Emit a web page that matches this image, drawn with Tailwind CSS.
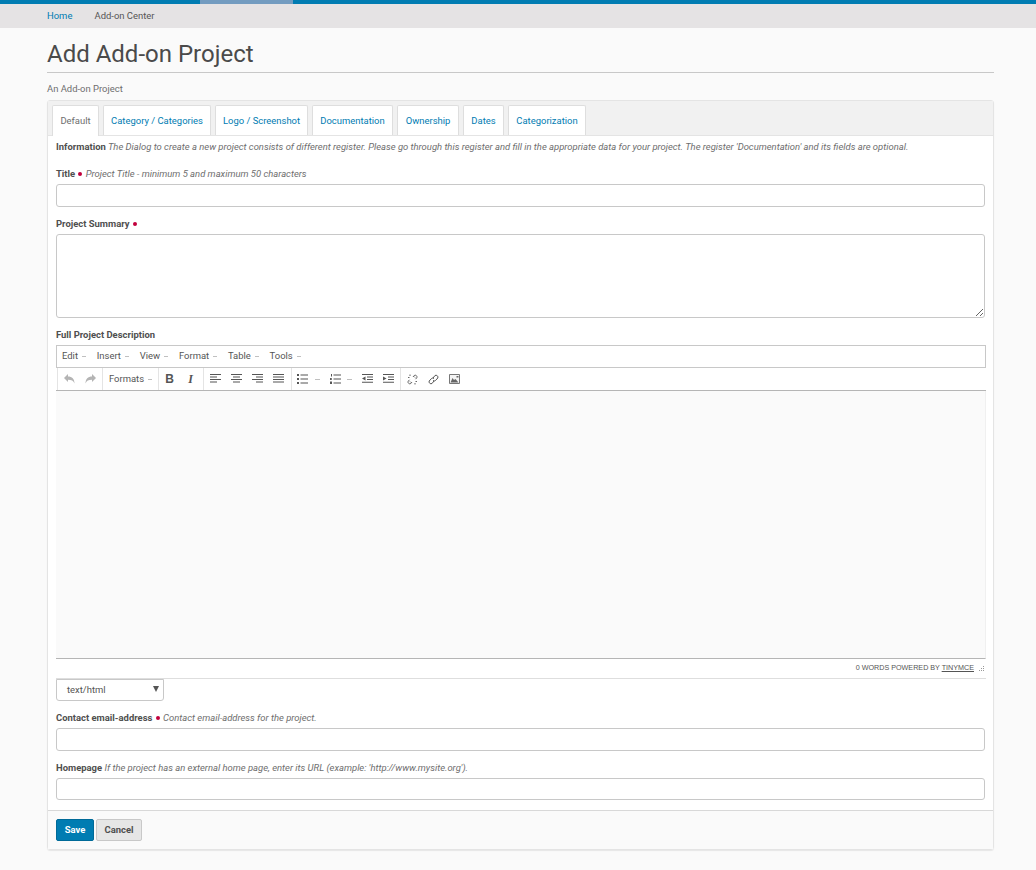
<!DOCTYPE html>
<html lang="en">
<head>
<meta charset="utf-8">
<title>Add Add-on Project</title>
<script src="https://cdn.jsdelivr.net/npm/@tailwindcss/browser@4"></script>
</head>
<body class="bg-[#fafafa] font-['Roboto',sans-serif] text-[#444] h-[870px] overflow-hidden">
    <!-- top bar -->
    <div class="h-1 bg-[#007cb2] pl-[200px]">
        <div class="w-[93px] h-1 bg-[#739cc0]"></div>
    </div>
    <!-- breadcrumb -->
    <div class="h-6 bg-[#e5e3e4] pl-[47px] flex items-center text-[9.45px]">
        <a class="text-[#007cb2] w-[47.5px]">Home</a>
        <span class="text-[#555]">Add-on Center</span>
    </div>

    <div class="w-[947px] ml-[47px]">
        <h1 class="text-[24px] leading-[30px] mt-[11px] h-[30px] text-[#4a4a4a]">Add Add-on Project</h1>
        <div class="border-b border-[#c8c8c8] h-[1px] mt-[3px] mb-[10px]"></div>
        <div class="text-[9.45px] leading-[12px] text-[#6e6e6e] mb-[5px]">An Add-on Project</div>

        <div class="border border-[#e4e4e4] rounded-[3px] shadow-[0_1px_1px_rgba(0,0,0,0.08)] h-[750px] flex flex-col">
            <!-- tabs -->
            <div class="h-[35px] bg-[#f1f1f1] pl-1 pt-1 flex gap-1 text-[9.45px] shrink-0 border-b border-[#e4e4e4]">
                <a class="w-[47px] h-[31px] bg-white rounded-t-[2px] border border-[#dedede] border-b-0 flex items-center justify-center text-[#6e6e6e]">Default</a>
                <a class="w-[108px] h-[30px] bg-white rounded-t-[2px] border border-[#dedede] border-b-0 flex items-center justify-center pt-[1px] text-[#007cb2]">Category / Categories</a>
                <a class="w-[93px] h-[30px] bg-white rounded-t-[2px] border border-[#dedede] border-b-0 flex items-center justify-center pt-[1px] text-[#007cb2]">Logo / Screenshot</a>
                <a class="w-[81px] h-[30px] bg-white rounded-t-[2px] border border-[#dedede] border-b-0 flex items-center justify-center pt-[1px] text-[#007cb2]">Documentation</a>
                <a class="w-[62px] h-[30px] bg-white rounded-t-[2px] border border-[#dedede] border-b-0 flex items-center justify-center pt-[1px] text-[#007cb2]">Ownership</a>
                <a class="w-[41px] h-[30px] bg-white rounded-t-[2px] border border-[#dedede] border-b-0 flex items-center justify-center pt-[1px] text-[#007cb2]">Dates</a>
                <a class="w-[78px] h-[30px] bg-white rounded-t-[2px] border border-[#dedede] border-b-0 flex items-center justify-center pt-[1px] text-[#007cb2]">Categorization</a>
            </div>

            <!-- form -->
            <div class="flex-1 bg-white pl-2 pr-2 text-[9.45px]">
                <p class="mt-[5px] leading-[12px] text-[#6e6e6e] italic"><b class="not-italic font-bold text-[#4f4f4f]">Information</b> The Dialog to create a new project consists of different register. Please go through this register and fill in the appropriate data for your project. The register 'Documentation' and its fields are optional.</p>

                <p class="mt-[15px] leading-[12px] text-[#6e6e6e] italic"><b class="not-italic font-bold text-[#4f4f4f]">Title</b> <span class="inline-block w-[4px] h-[4px] mx-[1px] rounded-full bg-[#c2003c] align-[1px]"></span> Project Title - minimum 5 and maximum 50 characters</p>
                <div class="mt-[4px] h-[23px] w-[929px] bg-white border border-[#c8c8c8] rounded-[3px]"></div>

                <p class="mt-[11px] leading-[12px] text-[#6e6e6e]"><b class="font-bold text-[#4f4f4f]">Project Summary</b> <span class="inline-block w-[4px] h-[4px] mx-[1px] rounded-full bg-[#c2003c] align-[1px]"></span></p>
                <textarea class="block mt-[4px] h-[84px] w-[929px] bg-white border border-[#c8c8c8] rounded-[3px]"></textarea>

                <p class="mt-[11px] leading-[12px] font-bold text-[#4f4f4f]">Full Project Description</p>

                <!-- tinymce -->
                <div class="mt-[4px] w-[930px] h-[334px] flex flex-col border-b border-[#dedede] text-[#555]">
                    <div class="h-[23px] border border-[#c8c8c8] bg-white flex items-center pl-[5px] gap-[10.8px] shrink-0">
                        <span class="flex items-center">Edit<i class="w-[4px] h-px ml-[4px] bg-[#c0c0c0]"></i></span>
                        <span class="flex items-center">Insert<i class="w-[4px] h-px ml-[4px] bg-[#c0c0c0]"></i></span>
                        <span class="flex items-center">View<i class="w-[4px] h-px ml-[4px] bg-[#c0c0c0]"></i></span>
                        <span class="flex items-center">Format<i class="w-[4px] h-px ml-[4px] bg-[#c0c0c0]"></i></span>
                        <span class="flex items-center">Table<i class="w-[4px] h-px ml-[4px] bg-[#c0c0c0]"></i></span>
                        <span class="flex items-center">Tools<i class="w-[4px] h-px ml-[4px] bg-[#c0c0c0]"></i></span>
                    </div>
                    <div class="h-[23px] border-b border-[#b5b5b5] bg-white flex items-center shrink-0 pl-[1px]">
                        <!-- undo redo -->
                        <div class="w-[45px] h-full flex items-center border-l border-[#e4e4e4] pl-[6px] gap-[10px]">
                            <svg class="w-[11px] h-[10px] text-[#b4b4b4]" viewBox="0 0 11 10" fill="currentColor"><path d="M0 4 4 0v2.400c4 0 6.500 2.400 6.500 7-1-2.600-3-3.700-6.500-3.700V8z"/></svg>
                            <svg class="w-[11px] h-[10px] text-[#b4b4b4]" viewBox="0 0 11 10" fill="currentColor"><path d="M11 4 7 0v2.400c-4 0-6.500 2.400-6.500 7 1-2.600 3-3.700 6.500-3.700V8z"/></svg>
                        </div>
                        <div class="w-[56px] h-full border-l border-[#e4e4e4] flex items-center pl-[6px]">Formats<i class="w-[4px] h-px ml-[4px] bg-[#c0c0c0]"></i></div>
                        <!-- bold italic -->
                        <div class="w-[45px] h-full border-l border-[#e4e4e4] flex items-center">
                            <span class="w-[21px] text-center text-[12px] font-bold font-['Liberation_Sans',sans-serif] text-[#555]">B</span>
                            <span class="w-[21px] text-center text-[12px] italic font-bold font-['Liberation_Serif',serif] text-[#555]">I</span>
                        </div>
                        <!-- align -->
                        <div class="w-[88px] h-full border-l border-[#e4e4e4] flex items-center pl-[6px] gap-[10px]">
                            <svg class="w-[11px] h-[10px]" viewBox="0 0 11 10" fill="#555"><path d="M0 0h11v1H0zM0 2.500h7v1H0zM0 5h11v1H0zM0 7.500h7v1H0z"/></svg>
                            <svg class="w-[11px] h-[10px]" viewBox="0 0 11 10" fill="#555"><path d="M0 0h11v1H0zM2 2.500h7v1H2zM0 5h11v1H0zM2 7.500h7v1H2z"/></svg>
                            <svg class="w-[11px] h-[10px]" viewBox="0 0 11 10" fill="#555"><path d="M0 0h11v1H0zM4 2.500h7v1H4zM0 5h11v1H0zM4 7.500h7v1H4z"/></svg>
                            <svg class="w-[11px] h-[10px]" viewBox="0 0 11 10" fill="#555"><path d="M0 0h11v1H0zM0 2.500h11v1H0zM0 5h11v1H0zM0 7.500h11v1H0z"/></svg>
                        </div>
                        <!-- lists indent -->
                        <div class="w-[109px] h-full border-l border-[#e4e4e4] flex items-center pl-[5px]">
                            <svg class="w-[11px] h-[10px]" viewBox="0 0 11 10" fill="#555"><path d="M0 0h2v2H0zM0 4h2v2H0zM0 8h2v2H0zM3.500 .5H11v1H3.500zM3.500 4.500H11v1H3.500zM3.500 8.500H11v1H3.500z"/></svg>
                            <i class="w-[5px] h-px ml-[7px] bg-[#c0c0c0]"></i>
                            <svg class="w-[11px] h-[10px] ml-[10px]" viewBox="0 0 11 10" fill="#555"><path d="M1 0h1v2.500H1zM0 4h2v.7H.8v.6H2V6H0zM0 7.500h2V10H0zM3.500 .5H11v1H3.500zM3.500 4.500H11v1H3.500zM3.500 8.500H11v1H3.500z"/></svg>
                            <i class="w-[5px] h-px ml-[6px] bg-[#c0c0c0]"></i>
                            <svg class="w-[11px] h-[10px] ml-[10px]" viewBox="0 0 11 10" fill="#555"><path d="M0 0h11v1H0zM5 2.500h6v1H5zM5 5h6v1H5zM0 7.800h11v1H0zM3.500 2.500v4L0 4.500z"/></svg>
                            <svg class="w-[11px] h-[10px] ml-[10px]" viewBox="0 0 11 10" fill="#555"><path d="M0 0h11v1H0zM5 2.500h6v1H5zM5 5h6v1H5zM0 7.800h11v1H0zM0 2.500v4l3.500-2z"/></svg>
                        </div>
                        <!-- links image -->
                        <div class="h-full border-l border-[#e4e4e4] flex items-center pl-[6px] gap-[10px]">
                            <svg class="w-[11px] h-[11px]" viewBox="0 0 11 11" fill="none" stroke="#666" stroke-width="1"><path d="M6 3 7.200 1.500a1.800 1.800 0 0 1 2.600 2.300L8.500 5.200M5 8 3.800 9.500a1.800 1.800 0 0 1-2.600-2.300L2.500 5.800M1 3.500h1.500M3 .5V2M7 2.500l1 1M3 7.500l1 1M10 7.500H8.500M8 10.500V9"/></svg>
                            <svg class="w-[11px] h-[11px]" viewBox="0 0 11 11" fill="none" stroke="#555" stroke-width="1"><path d="M5 4 7 1.500a2 2 0 0 1 2.800 2.500L7.500 6.500a2 2 0 0 1-2.500 0M6 7 4 9.500A2 2 0 0 1 1.200 7L3.500 4.500a2 2 0 0 1 2.500 0"/></svg>
                            <svg class="w-[11px] h-[10px]" viewBox="0 0 11 10"><path d="M.5.5h10v9H.5z" fill="#f4f4f4" stroke="#777"/><path d="M1.500 8.500 3.500 4l1.500 2 1.500-1 3 3.500z" fill="#666"/><path d="M7.500 2h2v1.500h-2z" fill="#666"/></svg>
                        </div>
                    </div>
                    <div class="flex-1 bg-[#fafafa] border-b border-[#b5b5b5] border-r border-r-[#f0f0f0]"></div>
                    <div class="h-[19px] shrink-0 flex items-center justify-end pr-[2px] text-[7.2px] text-[#555] font-['Liberation_Sans',sans-serif] whitespace-pre">
                        <span>0 WORDS POWERED BY <span class="underline">TINYMCE</span></span>
                        <svg class="w-[6px] h-[6px] ml-[4px]" viewBox="0 0 6 6" fill="#999"><path d="M5 0h1v1H5zM3 2h1v1H3zM5 2h1v1H5zM1 4h1v1H1zM3 4h1v1H3zM5 4h1v1H5z"/></svg>
                    </div>
                </div>

                <div class="relative h-[22px] w-[108px] bg-white border border-[#c8c8c8] rounded-b-[3px] flex items-center pl-[10px] text-[#555]">
                    text/html
                    <svg class="absolute right-[4px] top-[6px] w-[6px] h-[6px]" viewBox="0 0 6 6" fill="#555"><path d="M0 0h6L3 6z"/></svg>
                </div>

                <p class="mt-[11px] leading-[12px] text-[#6e6e6e] italic"><b class="not-italic font-bold text-[#4f4f4f]">Contact email-address</b> <span class="inline-block w-[4px] h-[4px] mx-[1px] rounded-full bg-[#c2003c] align-[1px]"></span> Contact email-address for the project.</p>
                <div class="mt-[4px] h-[23px] w-[929px] bg-white border border-[#c8c8c8] rounded-[3px]"></div>

                <p class="mt-[11px] leading-[12px] text-[#6e6e6e] italic"><b class="not-italic font-bold text-[#4f4f4f]">Homepage</b> If the project has an external home page, enter its URL (example: 'http://www.mysite.org').</p>
                <div class="mt-[4px] h-[22px] w-[929px] bg-white border border-[#c8c8c8] rounded-[3px]"></div>
            </div>

            <!-- footer -->
            <div class="h-[39px] shrink-0 bg-[#fafafa] border-t border-[#d8d8d8] pl-2 pt-2 flex gap-[2px] text-[9.45px] font-bold">
                <button class="w-[38px] h-[22px] bg-[#007cb2] border border-[#006a98] rounded-[2px] text-white">Save</button>
                <button class="w-[46px] h-[22px] bg-[#e6e6e6] border border-[#c8c8c8] rounded-[2px] text-[#4f4f4f]">Cancel</button>
            </div>
        </div>
    </div>
</body>
</html>
